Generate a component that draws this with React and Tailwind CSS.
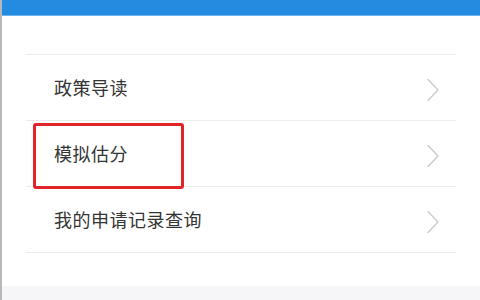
import React from 'react';

const items = ['政策导读', '模拟估分', '我的申请记录查询'];

const Chevron = () => (
  <svg width="14" height="24" viewBox="0 0 14 24" fill="none" className="shrink-0">
    <path d="M2 1.5 L12 12 L2 22.5" stroke="#c9c9cc" strokeWidth="1.3" strokeLinecap="round" strokeLinejoin="round" />
  </svg>
);

export default function App() {
  return (
    <div
      className="w-[480px] h-[300px] bg-white overflow-hidden flex flex-col border-l-2 border-[#b8b8bc]"
      style={{ fontFamily: '"Noto Sans CJK SC", "Noto Sans", sans-serif' }}
    >
      {/* Header bar (cropped) */}
      <div className="h-[16px] bg-[#238be0] border-b border-[#6fb3ea] shrink-0" />

      <div className="flex-1 flex flex-col">
        <div className="pt-[38px] px-[24px]">
          <div className="border-t border-[#ececee]">
            {items.map((label, i) => (
              <div key={label} className="relative h-[66px] border-b border-[#ececee] flex items-center justify-between pl-[28px] pr-[16px]">
                <span className="text-[18px] text-[#333333] tracking-[0.5px]">{label}</span>
                <div className="pt-[4px]">
                  <Chevron />
                </div>
                {i === 1 && (
                  <div className="absolute left-[7px] top-[2px] w-[151px] h-[66px] border-[3px] border-[#e0242a] rounded-[3px]" />
                )}
              </div>
            ))}
          </div>
        </div>
        <div className="flex-1" />
        <div className="h-[14px] bg-[#f6f6f9]" />
      </div>
    </div>
  );
}
